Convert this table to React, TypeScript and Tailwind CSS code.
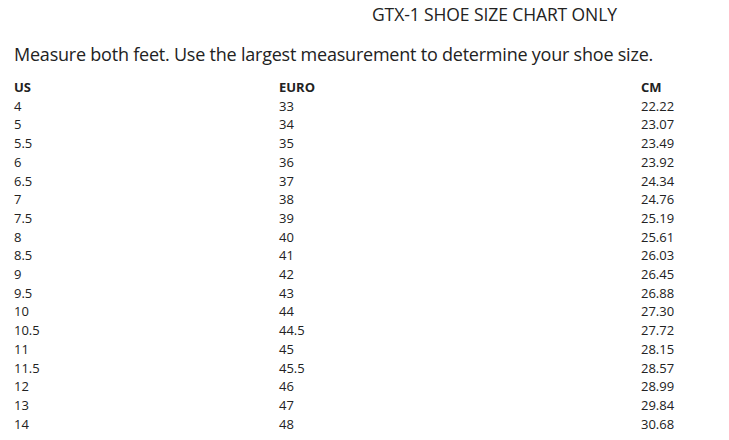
const ROWS: [string, string, string][] = [
  ["4", "33", "22.22"],
  ["5", "34", "23.07"],
  ["5.5", "35", "23.49"],
  ["6", "36", "23.92"],
  ["6.5", "37", "24.34"],
  ["7", "38", "24.76"],
  ["7.5", "39", "25.19"],
  ["8", "40", "25.61"],
  ["8.5", "41", "26.03"],
  ["9", "42", "26.45"],
  ["9.5", "43", "26.88"],
  ["10", "44", "27.30"],
  ["10.5", "44.5", "27.72"],
  ["11", "45", "28.15"],
  ["11.5", "45.5", "28.57"],
  ["12", "46", "28.99"],
  ["13", "47", "29.84"],
  ["14", "48", "30.68"],
];

export default function App() {
  return (
    <div className="w-[729px] h-[440px] overflow-hidden bg-white text-[#222] font-['Open_Sans',sans-serif]">
      {/* Title */}
      <div className="pl-[372px] pt-[2px] text-[17.5px] leading-[24px] tracking-[-0.1px]">
        GTX-1 SHOE SIZE CHART ONLY
      </div>

      {/* Intro */}
      <p className="pl-[14px] mt-[16px] text-[18px] leading-[24px] tracking-[-0.22px]">
        Measure both feet. Use the largest measurement to determine your shoe size.
      </p>

      {/* Table */}
      <div className="pl-[14px] mt-[12px] text-[13px]">
        <div className="grid grid-cols-[265px_362px_1fr] font-bold leading-[18.7px]">
          <span>US</span>
          <span>EURO</span>
          <span>CM</span>
        </div>
        {ROWS.map(([us, eu, cm]) => (
          <div key={us} className="grid grid-cols-[265px_362px_1fr] leading-[18.7px]">
            <span>{us}</span>
            <span>{eu}</span>
            <span>{cm}</span>
          </div>
        ))}
      </div>
    </div>
  );
}
